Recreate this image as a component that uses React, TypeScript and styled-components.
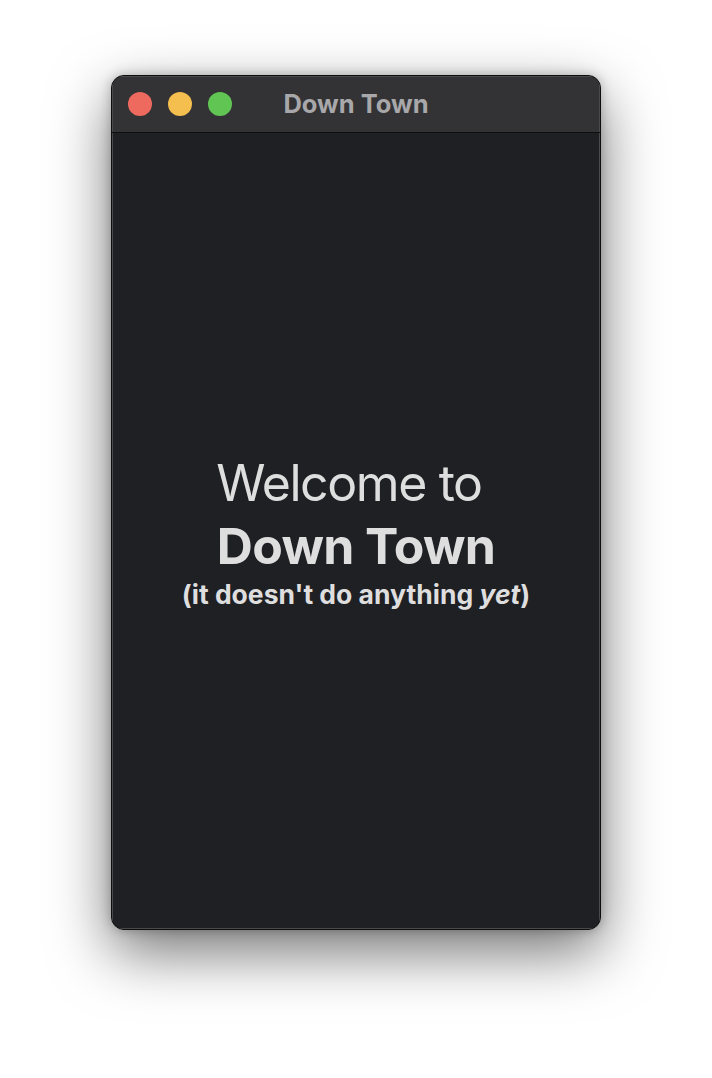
import React from "react";
import styled, { createGlobalStyle } from "styled-components";

const Global = createGlobalStyle`
  html, body { margin: 0; padding: 0; background: #ffffff; }
  body { font-family: Inter, "Noto Sans", sans-serif; }
`;

const Page = styled.div`
  width: 712px;
  height: 1078px;
  display: flex;
  justify-content: center;
  padding-top: 75px;
  box-sizing: border-box;
`;

const Window = styled.div`
  width: 490px;
  height: 855px;
  border-radius: 13px;
  background: #1f2024;
  border: 1px solid #0e0e10;
  box-shadow: 0 22px 60px rgba(0, 0, 0, 0.55), 0 0 12px rgba(0, 0, 0, 0.25);
  box-sizing: border-box;
  display: flex;
  flex-direction: column;
  overflow: hidden;
`;

const TitleBar = styled.div`
  position: relative;
  height: 57px;
  flex: none;
  background: #333335;
  border-bottom: 1px solid #0f0f11;
  box-shadow: inset 0 1px 0 #4a4a4d, inset 1px 0 0 #4a4a4d, inset -1px 0 0 #4a4a4d;
  display: flex;
  align-items: center;
  justify-content: center;
  box-sizing: border-box;
`;

const Lights = styled.div`
  position: absolute;
  left: 16px;
  top: 16px;
  display: flex;
  gap: 16px;
`;

const Light = styled.span<{ $c: string }>`
  width: 24px;
  height: 24px;
  border-radius: 50%;
  background: ${(p) => p.$c};
  display: block;
`;

const Title = styled.div`
  font-family: Inter, sans-serif;
  font-weight: 700;
  font-size: 25.5px;
  color: #a8a8aa;
  margin-top: -2px;
`;

const Content = styled.div`
  flex: 1;
  display: flex;
  flex-direction: column;
  align-items: center;
  justify-content: center;
  color: #dededf;
  font-family: Inter, sans-serif;
  box-shadow: inset 1px 0 0 #4a4a4d, inset -1px 0 0 #4a4a4d, inset 0 -1px 0 #4a4a4d;
`;

const Welcome = styled.div`
  font-size: 50px;
  font-weight: 400;
  line-height: 63px;
  letter-spacing: -1.4px;
  white-space: pre;
  padding-right: 14px;
`;

const Big = styled.div`
  font-size: 50px;
  font-weight: 700;
  line-height: 63px;
  letter-spacing: -0.7px;
`;

const Sub = styled.div`
  font-size: 26.5px;
  font-weight: 700;
  line-height: 32px;
  em { font-style: italic; }
`;

export default function App() {
  return (
    <>
      <Global />
      <Page>
        <Window>
          <TitleBar>
            <Lights>
              <Light $c="#ee6a5f" />
              <Light $c="#f5bf4f" />
              <Light $c="#61c554" />
            </Lights>
            <Title>Down Town</Title>
          </TitleBar>
          <Content>
            <Welcome>Welcome to</Welcome>
            <Big>Down Town</Big>
            <Sub>
              (it doesn't do anything <em>yet</em>)
            </Sub>
          </Content>
        </Window>
      </Page>
    </>
  );
}
